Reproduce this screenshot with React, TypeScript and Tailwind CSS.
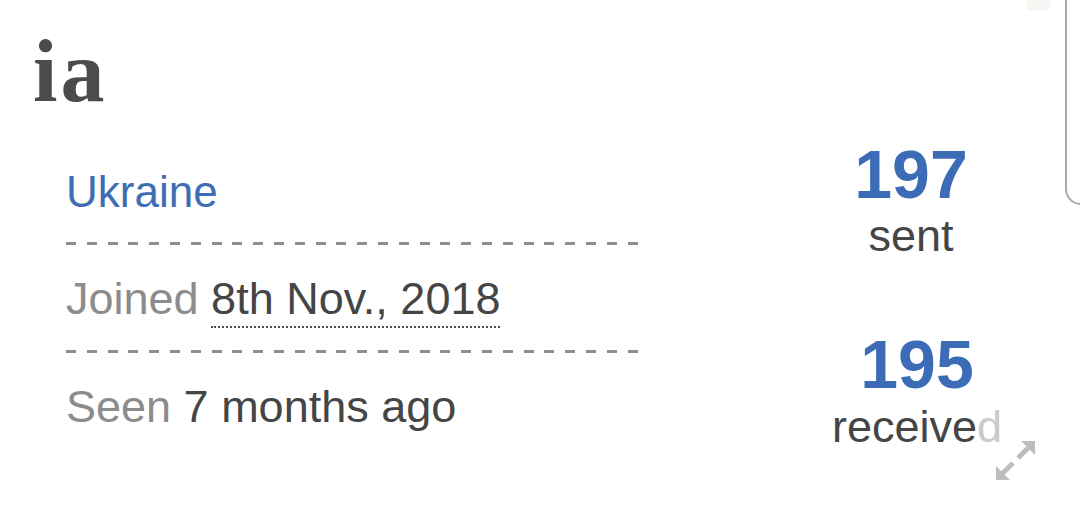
import React from "react";

const sans = { fontFamily: '"Liberation Sans", Arial, Helvetica, sans-serif' };

function Dashes({ className = "" }: { className?: string }) {
  return (
    <div
      className={`h-[3px] w-[572px] bg-[repeating-linear-gradient(to_right,#8e8e8e_0px,#8e8e8e_10px,transparent_10px,transparent_20.8px)] ${className}`}
    />
  );
}

function ResizeIcon() {
  return (
    <svg width="40" height="40" viewBox="0 0 40 40" className="block">
      <polygon points="0,39 0,25 14,39" fill="#bdbdbd" />
      <line x1="5" y1="34" x2="17" y2="22" stroke="#bdbdbd" strokeWidth="5" />
      <polygon points="39,0 39,14 25,0" fill="#bdbdbd" />
      <line x1="34" y1="5" x2="22" y2="17" stroke="#bdbdbd" strokeWidth="5" />
    </svg>
  );
}

export default function App() {
  return (
    <div className="relative w-[1080px] h-[515px] overflow-hidden bg-white" style={sans}>
      <div className="pl-[33px] pt-[28px]">
        <h1
          className="text-[88px] leading-[88px] font-bold text-[#4b4b4b] tracking-[3px]"
          style={{ fontFamily: '"Liberation Serif", "Times New Roman", serif' }}
        >
          ia
        </h1>
      </div>

      <div className="flex">
        <div className="ml-[66px] w-[745px] flex flex-col">
          <div className="mt-[52px] text-[44px] leading-[48px] text-[#3e6db4]">Ukraine</div>
          <Dashes className="mt-[26px]" />
          <div className="mt-[29px] text-[45px] leading-[50px] whitespace-nowrap">
            <span className="text-[#8c8c8c]">Joined </span>
            <span className="text-[#454545] border-b-2 border-dotted border-[#4a4a4a] pb-[2px]">
              8th Nov., 2018
            </span>
          </div>
          <Dashes className="mt-[26px]" />
          <div className="mt-[29px] text-[45px] leading-[50px] whitespace-nowrap">
            <span className="text-[#8c8c8c]">Seen </span>
            <span className="text-[#454545]">7 months ago</span>
          </div>
        </div>

        <div className="w-[200px] flex flex-col">
          <div className="flex flex-col items-center">
            <div className="mt-[24px] text-[68px] leading-[68px] font-bold text-[#3b6cb5]">197</div>
            <div className="mt-[3px] text-[45px] leading-[50px] text-[#454545]">sent</div>
          </div>
          <div className="flex flex-col items-center pl-[12px]">
            <div className="mt-[69px] text-[68px] leading-[68px] font-bold text-[#3b6cb5]">195</div>
            <div className="mt-[4px] text-[45px] leading-[50px] text-[#454545] whitespace-nowrap">
              receive<span className="text-[#cacaca]">d</span>
            </div>
          </div>
        </div>
      </div>

      <div className="absolute left-[996px] top-[441px]">
        <ResizeIcon />
      </div>

      <div className="absolute left-[1065px] top-[-20px] w-[40px] h-[225px] rounded-[16px] border-2 border-[#ababab] bg-white" />
      <div className="absolute left-[1027px] top-0 w-[23px] h-[10px] bg-[#f6f6f3]" />
    </div>
  );
}
